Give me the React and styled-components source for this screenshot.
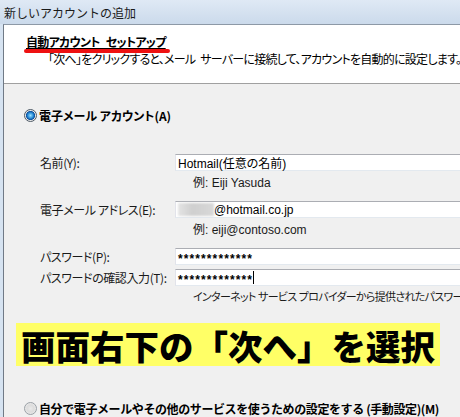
import React from 'react';
import styled, { createGlobalStyle } from 'styled-components';

const GlobalStyle = createGlobalStyle`
  html, body {
    margin: 0;
    padding: 0;
    background: #dbe6f3;
  }
`

const jp = `"Noto Sans CJK JP", "Liberation Sans", sans-serif`

const Window = styled.div`
    width: 460px;
    height: 417px;
    overflow: hidden;
    display: flex;
    flex-direction: column;
    background: #d6e3f1;
    font-family: ${jp};
    color: #000;
`

const TitleBar = styled.div`
    height: 24px;
    flex: none;
    display: flex;
    align-items: center;
    padding-left: 4px;
    font-size: 12px;
    color: #1a1a1a;
    background: linear-gradient(180deg, #dfe9f5 0%, #d3e0ef 60%, #cbdaeb 100%);
`

const Body = styled.div`
    flex: 1;
    margin-left: 3px;
    border-left: 1px solid #707a86;
    border-top: 1px solid #8d99a6;
    background: #f0f0f0;
    display: flex;
    flex-direction: column;
`

const Header = styled.div`
    height: 59px;
    flex: none;
    background: #fff;
    border-bottom: 1px solid #a0a0a0;
    box-sizing: border-box;
    padding: 9px 0 0 22px;
    font-feature-settings: "palt";
    font-size: 12px;
    line-height: 16px;
    white-space: nowrap;
`

const HeaderTitle = styled.div`
    position: relative;
    display: inline-block;
    font-weight: bold;
    letter-spacing: -0.7px;
    word-spacing: 4px;
    text-decoration: underline;
    text-underline-offset: 1px;

    &::after {
        content: '';
        position: absolute;
        left: -2px;
        right: -4px;
        top: 15px;
        height: 4px;
        border-radius: 2px;
        background: #ee1111;
    }
`

const HeaderText = styled.div`
    padding-left: 22px;
    margin-top: 1px;
    letter-spacing: -0.75px;
    word-spacing: 3px;
`

const RadioRow = styled.div`
    display: flex;
    align-items: center;
    gap: 2px;
    padding-left: 20px;
    margin-top: ${props => props.top}px;
    height: 14px;
    font-size: 12px;
    font-weight: bold;
    white-space: nowrap;
    font-feature-settings: ${props => props.palt ? '"palt"' : 'normal'};
    letter-spacing: ${props => props.spacing || 0}px;
`

const Radio = styled.span`
    width: 11px;
    height: 11px;
    flex: none;
    border-radius: 50%;
    border: 1px solid ${props => props.checked ? '#4e5a66' : '#9aa0a6'};
    background: ${props => props.checked
        ? 'radial-gradient(circle, #9fe1ff 0%, #2a8fd8 35%, #0e4f9c 55%, #e8e8e8 62%, #ffffff 100%)'
        : 'radial-gradient(circle, #e9e9e9 0%, #dcdcdc 45%, #f6f6f6 100%)'};
`

const Form = styled.div`
    padding-left: 36px;
    margin-top: 32px;
    display: flex;
    flex-direction: column;
`

const Field = styled.div`
    display: flex;
    align-items: center;
    height: 17px;
    margin-top: ${props => props.top || 0}px;
`

const Label = styled.div`
    width: 135px;
    flex: none;
    font-size: 12px;
    font-feature-settings: "palt";
    letter-spacing: -0.4px;
    color: #1a1a1a;
    white-space: nowrap;
`

const Input = styled.div`
    width: 320px;
    height: 17px;
    flex: none;
    box-sizing: border-box;
    border: 1px solid #abadb3;
    border-left-color: #e2e3ea;
    border-bottom-color: #e3e9ef;
    background: #fff;
    display: flex;
    align-items: center;
    padding-left: 2px;
    font-family: "Liberation Sans", ${jp};
    font-size: 12px;
    font-feature-settings: "palt";
`

const Blur = styled.span`
    display: inline-block;
    width: 36px;
    height: 13px;
    background: linear-gradient(90deg, #e4e4e4, #cfcfcf 40%, #d8d8d8);
    filter: blur(1px);
`

const Stars = styled.span`
    font-family: "Liberation Sans", sans-serif;
    font-weight: bold;
    font-size: 12px;
    letter-spacing: 1.1px;
    padding-top: 4px;
`

const Caret = styled.span`
    display: inline-block;
    width: 1px;
    height: 13px;
    background: #000;
`

const Hint = styled.div`
    padding-left: 153px;
    height: 14px;
    margin-top: ${props => props.top || 3}px;
    display: flex;
    align-items: center;
    font-family: "Liberation Sans", ${jp};
    font-size: ${props => props.small ? 11 : 12}px;
    letter-spacing: ${props => props.small ? -0.7 : 0}px;
    font-feature-settings: "palt";
    color: #1a1a1a;
    white-space: nowrap;
`

const Callout = styled.div`
    margin: 20px 0 0 12px;
    width: 424px;
    height: 43px;
    background: #ffff66;
    display: flex;
    align-items: center;
    justify-content: center;
    font-size: 34.5px;
    font-weight: 900;
    white-space: nowrap;
`

const App = () => {
    return (
        <Window>
            <GlobalStyle />
            <TitleBar>新しいアカウントの追加</TitleBar>
            <Body>
                <Header>
                    <HeaderTitle>自動アカウント セットアップ</HeaderTitle>
                    <HeaderText>「次へ」をクリックすると、メール サーバーに接続して、アカウントを自動的に設定します。</HeaderText>
                </Header>

                <RadioRow top={24} palt>
                    <Radio checked />
                    <span>電子メール アカウント(A)</span>
                </RadioRow>

                <Form>
                    <Field>
                        <Label>名前(Y):</Label>
                        <Input>Hotmail(任意の名前)</Input>
                    </Field>
                    <Hint>例: Eiji Yasuda</Hint>

                    <Field top={13}>
                        <Label>電子メール アドレス(E):</Label>
                        <Input><Blur />@hotmail.co.jp</Input>
                    </Field>
                    <Hint>例: eiji@contoso.com</Hint>

                    <Field top={13}>
                        <Label>パスワード(P):</Label>
                        <Input><Stars>*************</Stars></Input>
                    </Field>
                    <Field top={4}>
                        <Label>パスワードの確認入力(T):</Label>
                        <Input><Stars>*************</Stars><Caret /></Input>
                    </Field>
                    <Hint top={3} small>インターネット サービス プロバイダーから提供されたパスワー</Hint>
                </Form>

                <Callout>画面右下の「次へ」を選択</Callout>

                <RadioRow top={35} spacing={-0.4}>
                    <Radio />
                    <span>自分で電子メールやその他のサービスを使うための設定をする (手動設定)(M)</span>
                </RadioRow>
            </Body>
        </Window>
    )
}

export default App
